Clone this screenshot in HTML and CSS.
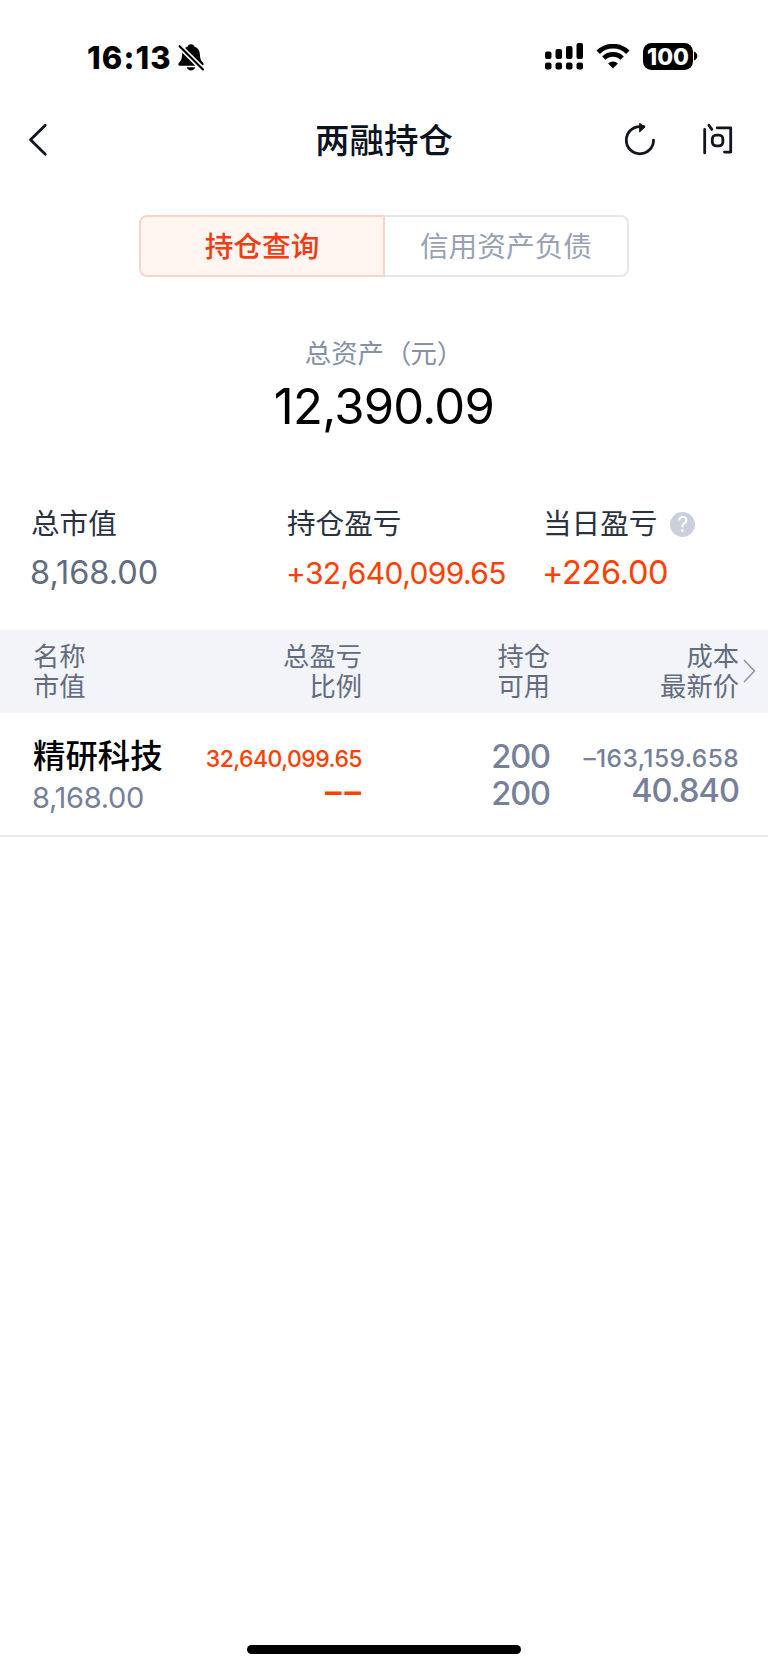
FILE: index.html
```html
<!DOCTYPE html>
<html lang="zh">
    <head>
        <meta charset="UTF-8" />
        <meta name="viewport" content="width=device-width, initial-scale=1.0" />
        <title>两融持仓</title>
        <link rel="stylesheet" href="styles.css">
    </head>
    <body>
        <div class="page">
            <!-- 状态栏 -->
            <div class="status">
                <span class="time">16:13</span>
                <svg class="bell" width="28" height="28" viewBox="0 0 28 28">
                    <path d="M14 1.2c-1.6 0-2.9.9-3.3 2.2C7 4.800 5.300 7.500 5.100 11.500c-.2 4-1 6-2.500 7.600C.6 21.200 1.200 22.800 3.200 22.800h21.600c2 0 2.600-1.600.6-3.700-1.500-1.600-2.300-3.600-2.500-7.600-.2-4-1.900-6.700-5.600-8.100C16.900 2.100 15.600 1.200 14 1.200z" />
                    <path d="M9.700 24.300h8.600c-.5 1.900-2.200 3.100-4.300 3.100s-3.800-1.200-4.300-3.100z" />
                    <path d="M2.200 2.800L26.500 27.100" stroke="#fff" stroke-width="5.400" />
                    <path d="M2.600 3.200L26 26.500" stroke="#000" stroke-width="2.100" stroke-linecap="round" />
                </svg>
                <svg class="signal" width="38" height="27" viewBox="0 0 38 27">
                    <rect x="0" y="8.500" width="6.500" height="7.500" rx="2" />
                    <rect x="10.500" y="6" width="6.500" height="10" rx="2" />
                    <rect x="21" y="3" width="6.500" height="13" rx="2" />
                    <rect x="31.500" y="0" width="6.500" height="16" rx="2" />
                    <rect x="0" y="19.500" width="6.500" height="7" rx="2" />
                    <rect x="10.500" y="19.500" width="6.500" height="7" rx="2" />
                    <rect x="21" y="19.500" width="6.500" height="7" rx="2" />
                    <rect x="31.500" y="19.500" width="6.500" height="7" rx="2" />
                </svg>
                <svg class="wifi" width="34" height="25" viewBox="0 0 34 25">
                    <path d="M2.200 8.300a21 21 0 0 1 29.600 0" fill="none" stroke="#000" stroke-width="4.800" />
                    <path d="M7.800 14.200a13 13 0 0 1 18.400 0" fill="none" stroke="#000" stroke-width="4.600" />
                    <path d="M17 24.400l-4.900-4.900a7 7 0 0 1 9.800 0z" />
                </svg>
                <div class="battery">100</div>
                <svg class="nub" width="4" height="10" viewBox="0 0 4 10">
                    <path d="M0 0.500c2 .6 3.300 2.300 3.300 4.500S2 8.900 0 9.500z" />
                </svg>
            </div>

            <!-- 标题栏 -->
            <div class="navbar">
                <svg class="back" width="22" height="34" viewBox="0 0 22 34">
                    <path d="M18.300 2.300L3.500 16.800 18.300 31.300" />
                </svg>
                <h1>两融持仓</h1>
                <div class="tools">
                    <svg width="32" height="34" viewBox="0 0 32 34">
                        <path d="M29.500 17.200a13.600 13.600 0 1 1-13.600-13.600h4" />
                        <path class="solid" d="M15.900 0.500l5 3.600-5 4.600z" />
                    </svg>
                    <svg width="32" height="34" viewBox="0 0 32 34">
                        <path d="M2.700 6.500v23.400M6.900 2.200l2.900 4.200M15.200 4.800h13.500v24.300h-6.200" />
                        <rect x="10.300" y="12.200" width="10.600" height="10.600" rx="3.800" />
                    </svg>
                </div>
            </div>

            <div class="tabs">
                <div class="tab active">持仓查询</div>
                <div class="tab">信用资产负债</div>
            </div>

            <div class="total">
                <div class="label">总资产<span class="open">（</span>元<span class="close">）</span></div>
                <div class="money">12,390.09</div>
            </div>

            <!-- 汇总 -->
            <div class="summary">
                <div class="item">
                    <div class="label">总市值</div>
                    <div class="value">8,168.00</div>
                </div>
                <div class="item">
                    <div class="label">持仓盈亏</div>
                    <div class="value red long">+32,640,099.65</div>
                </div>
                <div class="item">
                    <div class="label">当日盈亏 <span class="help">?</span></div>
                    <div class="value red">+226.00</div>
                </div>
            </div>

            <!-- 持仓列表 -->
            <div class="row head">
                <div class="cell">名称<br>市值</div>
                <div class="cell">总盈亏<br>比例</div>
                <div class="cell">持仓<br>可用</div>
                <div class="cell">成本<br>最新价</div>
                <svg class="more" width="13" height="24" viewBox="0 0 13 24">
                    <path d="M1 1l10.500 11L1 23" />
                </svg>
            </div>
            <div class="row stock">
                <div class="cell">
                    <div class="name">精研科技</div>
                    <div class="market">8,168.00</div>
                </div>
                <div class="cell red">
                    <div class="profit">32,640,099.65</div>
                    <div class="ratio">––</div>
                </div>
                <div class="cell">
                    <div class="count">200</div>
                    <div class="count">200</div>
                </div>
                <div class="cell">
                    <div class="cost">–163,159.658</div>
                    <div class="price">40.840</div>
                </div>
            </div>

            <div class="home"></div>
        </div>
    </body>
</html>
```
FILE: styles.css
```css
* {
    margin: 0;
    padding: 0;
    box-sizing: border-box;
}
body {
    background: #fff;
    font-family: Inter, "Noto Sans CJK SC", sans-serif;
    color: #000;
}
.page {
    width: 768px;
    height: 1669px;
    display: flex;
    flex-direction: column;
    overflow: hidden;
}
svg {
    display: block;
    flex: none;
}

/* 状态栏 */
.status {
    height: 100px;
    padding: 42px 0 0 87px;
    display: flex;
    align-items: flex-start;
}
.time {
    width: 90px;
    font-size: 31px;
    line-height: 31px;
    font-weight: 800;
    letter-spacing: 1.1px;
    white-space: nowrap;
}
.bell {
    margin-top: 1px;
}
.signal {
    margin: 1px 0 0 340px;
}
.wifi {
    margin: 2px 0 0 13px;
}
.battery {
    width: 50px;
    height: 27px;
    margin: 1px 0 0 13px;
    border-radius: 8.5px;
    background: #000;
    color: #fff;
    font-size: 23px;
    line-height: 28px;
    font-weight: 800;
    text-align: center;
}
.nub {
    margin: 9px 0 0 1px;
}

/* 标题栏 */
.navbar {
    height: 80px;
    padding: 0 34px 0 27px;
    display: grid;
    grid-template-columns: 150px 1fr 141px;
    align-items: center;
}
.navbar path,
.navbar rect {
    fill: none;
    stroke: #11151f;
    stroke-width: 2.8;
    stroke-linecap: round;
    stroke-linejoin: round;
}
.navbar .solid {
    fill: #11151f;
    stroke-width: 1;
}
.navbar h1 {
    padding: 1px 2px 0 0;
    font-size: 34.5px;
    line-height: 50px;
    font-weight: 500;
    color: #0b1220;
    text-align: center;
}
.tools {
    display: flex;
    justify-content: space-between;
    padding-left: 31px;
}

.tabs {
    width: 490px;
    height: 62px;
    margin: 35px 0 0 139px;
    display: flex;
}
.tab {
    flex: 1;
    padding-top: 1px;
    border: 2px solid #e3e7ef;
    border-left: none;
    border-radius: 0 8px 8px 0;
    font-size: 28.7px;
    line-height: 58px;
    color: #98a1b5;
    text-align: center;
}
.tab.active {
    border: 2px solid #fdd3c8;
    border-radius: 8px 0 0 8px;
    background: #fff5f1;
    color: #f03d14;
    font-weight: 500;
}

.total {
    height: 218px;
    padding-top: 56px;
    text-align: center;
}
.total .label {
    font-size: 26.4px;
    line-height: 40px;
    color: #8690a6;
}
.total .open {
    margin: 0 -1px 0 1px;
}
.total .money {
    font-size: 49px;
    line-height: 60px;
    margin-top: 4px;
    letter-spacing: -0.75px;
}

.red {
    color: #ff4000;
}
.summary {
    height: 135px;
    padding: 9px 0 0 31px;
    display: grid;
    grid-template-columns: 256px 256px 1fr;
}
.summary .label {
    display: flex;
    align-items: center;
    font-size: 28.6px;
    line-height: 40px;
    color: #2a3142;
}
.summary .value {
    margin: 9px 0 0 -1px;
    font-size: 32.5px;
    line-height: 40px;
    color: #626c80;
    letter-spacing: 0;
}
.summary .value.red {
    color: #ff4000;
    letter-spacing: -0.35px;
}
.summary .value.long {
    font-size: 30px;
    line-height: 41px;
    letter-spacing: -0.6px;
}
.help {
    width: 25px;
    height: 25px;
    margin-left: 13px;
    border-radius: 50%;
    background: #c9d0dc;
    color: #fff;
    font-size: 21px;
    line-height: 25px;
    text-align: center;
}

/* 持仓列表 */
.row {
    display: grid;
    grid-template-columns: 161px 168px 188px 189px 1fr;
    padding-left: 33px;
}
.cell {
    text-align: right;
    white-space: nowrap;
}
.cell:first-child {
    text-align: left;
}
.head {
    height: 83px;
    padding-top: 12px;
    background: #f2f4f9;
    font-size: 26.3px;
    line-height: 30px;
    color: #626c80;
}
.more {
    margin: 17px 0 0 4px;
}
.more path {
    fill: none;
    stroke: #8a93a5;
    stroke-width: 1.5;
}
.stock {
    height: 124px;
    border-bottom: 2px solid #e6ebf2;
    color: #76809a;
}
.stock .red {
    color: #ff4000;
}
.name {
    margin-top: 24px;
    font-size: 32.4px;
    line-height: 40px;
    font-weight: 500;
    color: #000;
}
.market {
    margin: 1px 0 0 -1px;
    font-size: 29px;
    line-height: 40px;
    letter-spacing: -0.3px;
}
.profit {
    margin-top: 26px;
    font-size: 23px;
    line-height: 40px;
    font-weight: 500;
    letter-spacing: -0.55px;
}
.ratio {
    margin: -8px -2px 0 0;
    font-size: 33px;
    line-height: 40px;
    font-weight: 600;
    letter-spacing: 3px;
}
.count {
    font-size: 32.5px;
    line-height: 37px;
    font-weight: 500;
    letter-spacing: -1.1px;
}
.count:first-child {
    margin-top: 25px;
}
.cost {
    margin-top: 25px;
    font-size: 24.5px;
    line-height: 40px;
    font-weight: 500;
    letter-spacing: 0.4px;
}
.price {
    margin-top: -7px;
    font-size: 32.5px;
    line-height: 40px;
    font-weight: 500;
    letter-spacing: -0.9px;
}

.home {
    width: 274px;
    height: 9px;
    margin: auto auto 15px;
    border-radius: 5px;
    background: #000;
}
```
